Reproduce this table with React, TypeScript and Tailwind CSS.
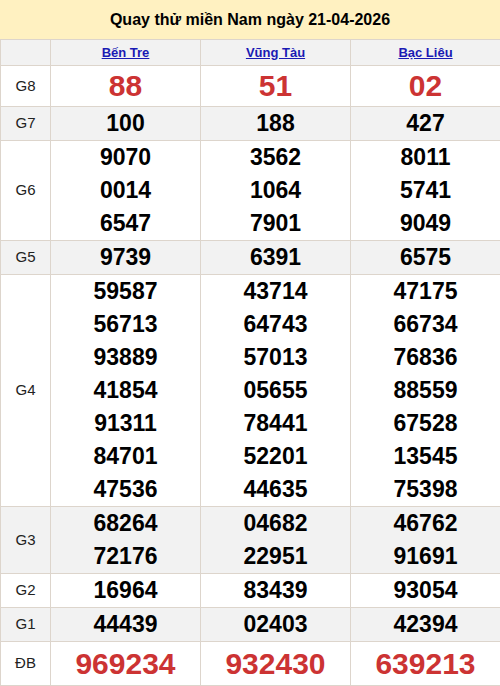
import React from "react";

type Row = { label: string; values: string[][]; red?: boolean; gray?: boolean; big?: "g8" | "db" };

const rows: Row[] = [
  { label: "G8", values: [["88"], ["51"], ["02"]], red: true, big: "g8" },
  { label: "G7", values: [["100"], ["188"], ["427"]], gray: true },
  { label: "G6", values: [["9070", "0014", "6547"], ["3562", "1064", "7901"], ["8011", "5741", "9049"]] },
  { label: "G5", values: [["9739"], ["6391"], ["6575"]], gray: true },
  {
    label: "G4",
    values: [
      ["59587", "56713", "93889", "41854", "91311", "84701", "47536"],
      ["43714", "64743", "57013", "05655", "78441", "52201", "44635"],
      ["47175", "66734", "76836", "88559", "67528", "13545", "75398"],
    ],
  },
  { label: "G3", values: [["68264", "72176"], ["04682", "22951"], ["46762", "91691"]], gray: true },
  { label: "G2", values: [["16964"], ["83439"], ["93054"]] },
  { label: "G1", values: [["44439"], ["02403"], ["42394"]], gray: true },
  { label: "ĐB", values: [["969234"], ["932430"], ["639213"]], red: true, big: "db" },
];

export default function App() {
  return (
    <div className="w-[500px] bg-white font-['Liberation_Sans',Arial,sans-serif] text-black">
      <div className="h-[39px] bg-[#fff1c1] flex items-center justify-center text-[16px] font-bold">
        Quay thử miền Nam ngày 21-04-2026
      </div>
      <table className="w-[500px] table-fixed border-collapse">
        <colgroup>
          <col className="w-[50px]" />
          <col className="w-[150px]" />
          <col className="w-[150px]" />
          <col className="w-[150px]" />
        </colgroup>
        <thead>
          <tr className="bg-[#f2f2f2] h-[26px]">
            <th className="border border-[#ddd5cc]"></th>
            {["Bến Tre", "Vũng Tàu", "Bạc Liêu"].map((n) => (
              <th key={n} className="border border-[#ddd5cc] text-[13px] font-bold text-center align-middle">
                <a href="#" className="text-[#1a1ab4] underline">{n}</a>
              </th>
            ))}
          </tr>
        </thead>
        <tbody>
          {rows.map((r) => (
            <tr key={r.label} className={r.gray ? "bg-[#f2f2f2]" : "bg-white"}>
              <td className="border border-[#ddd5cc] text-center align-middle text-[15px] text-[#222]">{r.label}</td>
              {r.values.map((col, i) => (
                <td key={i} className="border border-[#ddd5cc] text-center align-middle p-0">
                  {col.map((v) => (
                    <div
                      key={v}
                      className={
                        r.big === "g8"
                          ? "text-[30px] leading-[40px] font-bold text-[#cc3333]"
                          : r.big === "db"
                          ? "text-[30px] leading-[43px] font-bold text-[#cc3333]"
                          : "text-[23px] leading-[33px] font-bold"
                      }
                    >
                      {v}
                    </div>
                  ))}
                </td>
              ))}
            </tr>
          ))}
        </tbody>
      </table>
    </div>
  );
}
